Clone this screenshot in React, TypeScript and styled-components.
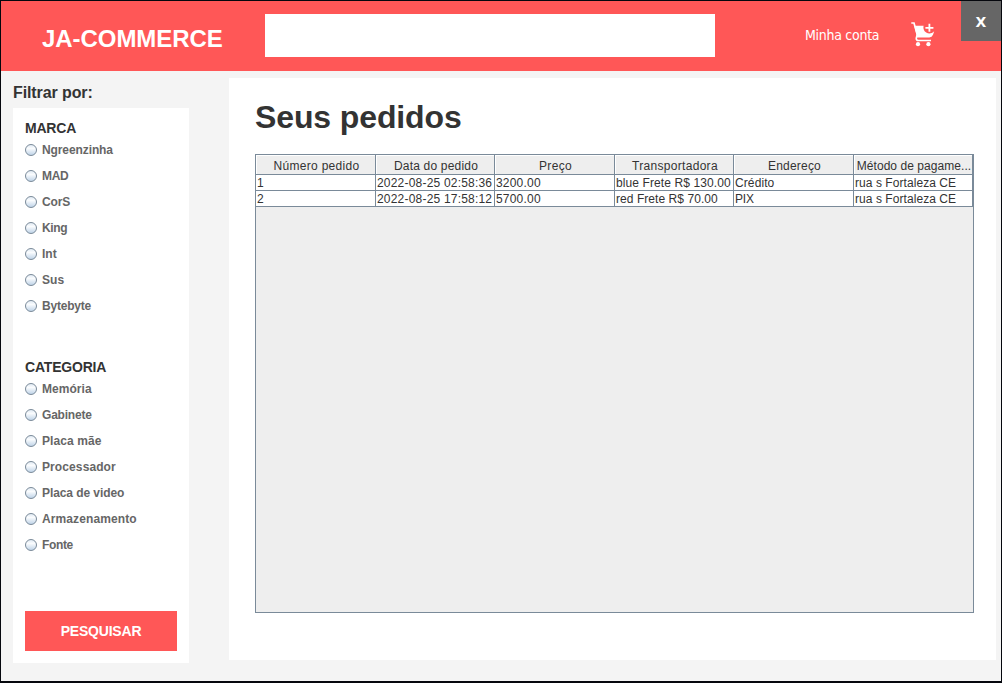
import React from "react";
import styled, { createGlobalStyle } from "styled-components";

const GlobalStyle = createGlobalStyle`
  * { box-sizing: border-box; }
  body { margin: 0; background: #000; }
  button, input { font: inherit; border: 0; margin: 0; padding: 0; border-radius: 0; }
`;

const coral = "#ff5757";
const line = "#7a8a99";

const Window = styled.div`
  width: 1002px;
  height: 683px;
  padding: 1px 1px 2px;
  background: #05070d;
  font-family: "Liberation Sans", Arial, sans-serif;
  color: #333;
`;

const Surface = styled.div`
  height: 680px;
  display: flex;
  flex-direction: column;
  background: #f4f4f4;
`;

const Header = styled.header`
  height: 70px;
  flex: none;
  display: flex;
  align-items: flex-start;
  background: ${coral};
  color: #fff;
`;

const Brand = styled.h1`
  margin: 24px 0 0 41px;
  width: 223px;
  font-size: 24px;
  line-height: 28px;
  letter-spacing: -0.05px;
`;

const Search = styled.input`
  width: 450px;
  height: 43px;
  margin-top: 13px;
  background: #fff;
  outline: none;
`;

const Account = styled.a`
  margin: 24px 0 0 90px;
  width: 106px;
  font: 14px/20px "DejaVu Sans Condensed", "DejaVu Sans", sans-serif;
  font-stretch: condensed;
  letter-spacing: -0.28px;
  white-space: nowrap;
`;

const CartButton = styled.button`
  width: 24px;
  height: 25px;
  margin-top: 21px;
  background: none;
  color: #fff;
  svg { display: block; }
`;

const Close = styled.button`
  width: 40px;
  height: 40px;
  margin-left: auto;
  padding-top: 1px;
  background: #666;
  color: #fff;
  font: bold 14px/40px "DejaVu Sans", sans-serif;
`;

const Body = styled.div`
  flex: 1;
  display: flex;
  align-items: flex-start;
  padding: 7px 5px 0 12px;
`;

const Aside = styled.aside`
  width: 216px;
  padding-top: 6px;
`;

const FilterTitle = styled.h2`
  margin: 0;
  height: 24px;
  font-size: 16px;
  line-height: 18px;
  letter-spacing: -0.1px;
`;

const Filters = styled.div`
  width: 176px;
  height: 555px;
  padding: 12px;
  background: #fff;
  display: flex;
  flex-direction: column;
`;

const Group = styled.section`
  height: 239px;
`;

const GroupTitle = styled.h3`
  margin: 0;
  font-size: 14px;
  line-height: 17px;
  letter-spacing: -0.2px;
`;

const Option = styled.label<{ $track?: number }>`
  display: flex;
  align-items: center;
  gap: 5px;
  height: 26px;
  font-size: 12px;
  font-weight: bold;
  line-height: 14px;
  letter-spacing: ${(p) => p.$track ?? 0}px;
  color: #666;
  white-space: nowrap;
`;

const Radio = styled.span`
  width: 12px;
  height: 12px;
  border: 1px solid ${line};
  border-radius: 50%;
  background: linear-gradient(#e2ebf4, #fafcfe 35%, #c0d4e8);
`;

const SearchButton = styled.button`
  height: 40px;
  margin-top: auto;
  background: ${coral};
  color: #fff;
  font-size: 14px;
  font-weight: bold;
  line-height: 40px;
  letter-spacing: -0.2px;
`;

const Main = styled.main`
  width: 767px;
  height: 582px;
  padding: 20px 0 0 26px;
  background: #fff;
`;

const Title = styled.h2`
  margin: 0;
  height: 56px;
  font-size: 32px;
  line-height: 38px;
  letter-spacing: -0.12px;
`;

const TableFrame = styled.div`
  width: 719px;
  height: 459px;
  border: 1px solid ${line};
  background: #eee;
`;

const Row = styled.div<{ $head?: boolean }>`
  display: grid;
  grid-template-columns: 120px 119px 120px 119px 120px 119px;
  grid-template-rows: 100%;
  height: ${(p) => (p.$head ? 20 : 16)}px;
`;

const HeadCell = styled.div`
  border-right: 1px solid ${line};
  border-bottom: 1px solid ${line};
  box-shadow: inset 1px 1px #fff;
  padding-left: 2px;
  font-size: 12px;
  line-height: 22px;
  text-align: center;
  white-space: nowrap;
`;

const Cell = styled.div`
  border-right: 1px solid ${line};
  border-bottom: 1px solid ${line};
  background: #fff;
  padding-left: 1px;
  font-size: 12px;
  line-height: 16px;
  white-space: nowrap;
`;

const Track = styled.span<{ $track: number }>`
  letter-spacing: ${(p) => p.$track}px;
`;

type Item = [string, number];

const brands: Item[] = [
  ["Ngreenzinha", -0.1], ["MAD", -0.3], ["CorS", -0.1], ["King", -0.4],
  ["Int", 0], ["Sus", 0.1], ["Bytebyte", -0.2],
];
const categories: Item[] = [
  ["Memória", 0.05], ["Gabinete", -0.2], ["Placa mãe", 0.1], ["Processador", 0.1],
  ["Placa de video", -0.08], ["Armazenamento", 0.1], ["Fonte", -0.35],
];
const columns: Item[] = [
  ["Número pedido", 0.3], ["Data do pedido", 0.2], ["Preço", 0.3],
  ["Transportadora", 0.3], ["Endereço", 0.2], ["Método de pagame...", 0.06],
];
const orders: Item[][] = [
  [["1", 0], ["2022-08-25 02:58:36", 0.2], ["3200.00", 0.2], ["blue Frete R$ 130.00", 0.1], ["Crédito", 0.1], ["rua s Fortaleza CE", 0.06]],
  [["2", 0], ["2022-08-25 17:58:12", 0.2], ["5700.00", 0.2], ["red Frete R$ 70.00", 0.06], ["PIX", -0.2], ["rua s Fortaleza CE", 0.06]],
];

function CartIcon() {
  return (
    <svg width="24" height="25" viewBox="0 0 24 25" fill="none">
      <path d="M0.3 1H3L6.2 12.6L5.3 16.2Q5 18.5 7.4 18.5H20" stroke="currentColor" strokeWidth="1.7" />
      <path d="M3.2 3.8H12.6C11.6 8.2 14.6 11.4 18.2 11.4C20.2 11.4 21.6 10.8 23.2 9.2L22 12.8Q21 15.4 18.3 15.4H6.2Z" fill="currentColor" />
      <path d="M18.4 1.8V9.8M14.4 5.8H22.4" stroke="currentColor" strokeWidth="1.8" />
      <circle cx="7" cy="22.2" r="2.1" fill="currentColor" />
      <circle cx="17.4" cy="22.2" r="2.1" fill="currentColor" />
    </svg>
  );
}

function FilterGroup({ title, items }: { title: string; items: Item[] }) {
  return (
    <Group>
      <GroupTitle>{title}</GroupTitle>
      {items.map(([label, track]) => (
        <Option key={label} $track={track}>
          <Radio />
          {label}
        </Option>
      ))}
    </Group>
  );
}

export default function App() {
  return (
    <Window>
      <GlobalStyle />
      <Surface>
        <Header>
          <Brand>JA-COMMERCE</Brand>
          <Search aria-label="Buscar" />
          <Account>Minha conta</Account>
          <CartButton aria-label="Carrinho"><CartIcon /></CartButton>
          <Close>X</Close>
        </Header>
        <Body>
          <Aside>
            <FilterTitle>Filtrar por:</FilterTitle>
            <Filters>
              <FilterGroup title="MARCA" items={brands} />
              <FilterGroup title="CATEGORIA" items={categories} />
              <SearchButton>PESQUISAR</SearchButton>
            </Filters>
          </Aside>
          <Main>
            <Title>Seus pedidos</Title>
            <TableFrame>
              <Row $head>
                {columns.map(([label, track]) => (
                  <HeadCell key={label}><Track $track={track}>{label}</Track></HeadCell>
                ))}
              </Row>
              {orders.map((order) => (
                <Row key={order[0][0]}>
                  {order.map(([value, track], i) => (
                    <Cell key={i}><Track $track={track}>{value}</Track></Cell>
                  ))}
                </Row>
              ))}
            </TableFrame>
          </Main>
        </Body>
      </Surface>
    </Window>
  );
}
